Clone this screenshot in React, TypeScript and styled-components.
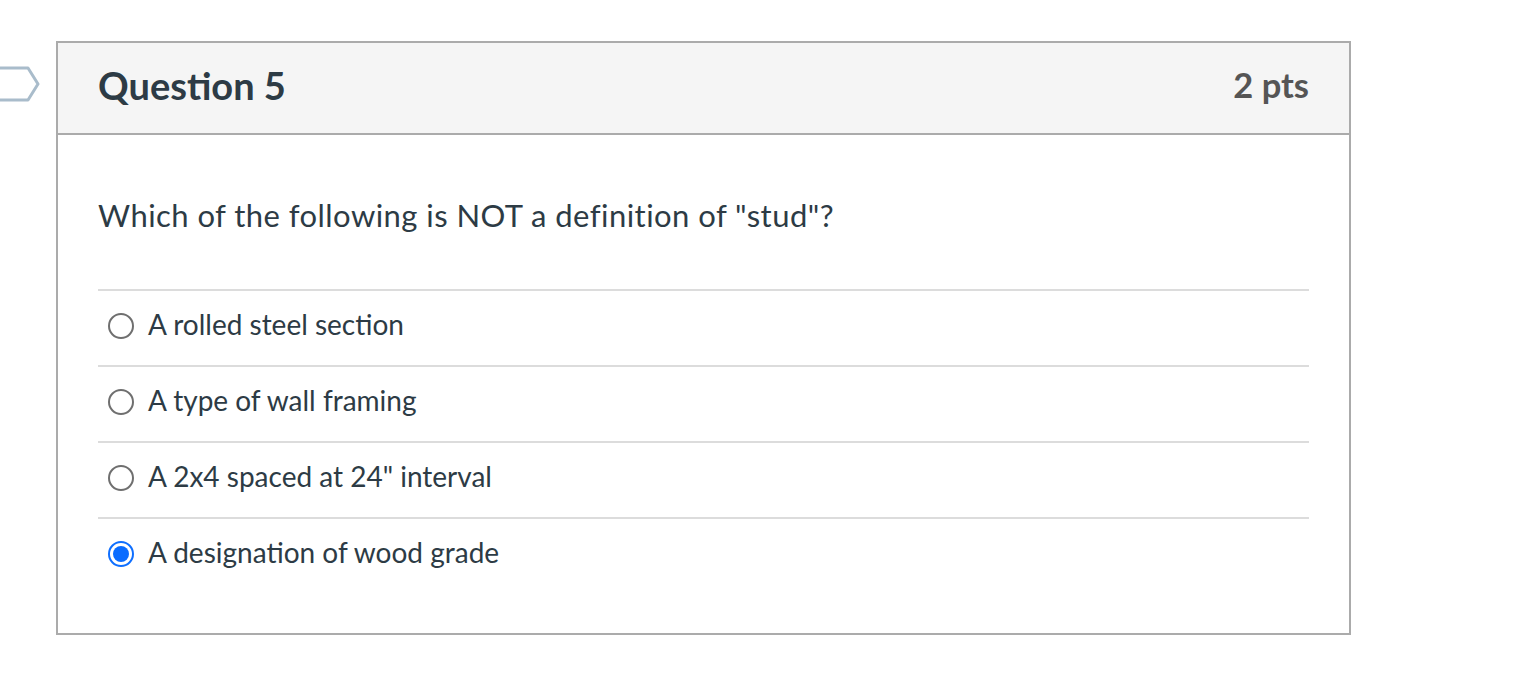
import React from "react";
import styled, { createGlobalStyle } from "styled-components";

const Global = createGlobalStyle`
  html, body { margin: 0; padding: 0; background: #fff; }
  body { font-family: Lato, "Open Sans", sans-serif; color: #2d3b45; }
`;

const Page = styled.div`
  padding: 41px 0 0 56px;
  width: 1295px;
  position: relative;
`;

const Flag = styled.svg`
  position: absolute;
  left: -4px;
  top: 66px;
`;

const Card = styled.div`
  border: 2px solid #ababab;
  background: #fff;
`;

const Header = styled.div`
  display: flex;
  justify-content: space-between;
  align-items: center;
  height: 92px;
  box-sizing: border-box;
  padding: 0 40px 7px;
  background: #f5f5f5;
  border-bottom: 2px solid #ababab;
`;

const Title = styled.h2`
  margin: 0;
  font-size: 38px;
  font-weight: 700;
  color: #2d3b45;
`;

const Points = styled.div`
  font-size: 34.5px;
  font-weight: 700;
  color: #555;
`;

const Body = styled.div`
  padding: 62px 40px 40px;
`;

const QuestionText = styled.p`
  margin: 0 0 56px;
  font-size: 31px;
  letter-spacing: 0.45px;
  line-height: 36px;
  color: #2d3b45;
`;

const Answers = styled.div`
  display: flex;
  flex-direction: column;
`;

const Row = styled.label`
  display: flex;
  align-items: center;
  gap: 14px;
  height: 76px;
  box-sizing: border-box;
  padding: 0 0 8px 10px;
  border-top: 2px solid #dcdcdc;
  font-size: 28px;
  color: #2d3b45;
`;

const Radio = styled.span<{ $checked?: boolean }>`
  width: 26px;
  height: 26px;
  box-sizing: border-box;
  border-radius: 50%;
  border: 2px solid ${p => (p.$checked ? "#0f6fff" : "#6f6f6f")};
  display: flex;
  align-items: center;
  justify-content: center;
  flex-shrink: 0;
  margin-top: 3px;
  &::after {
    content: "";
    width: 16px;
    height: 16px;
    border-radius: 50%;
    background: #0a6cff;
    display: ${p => (p.$checked ? "block" : "none")};
  }
`;

const answers = [
  { text: "A rolled steel section", checked: false },
  { text: "A type of wall framing", checked: false },
  { text: 'A 2x4 spaced at 24" interval', checked: false },
  { text: "A designation of wood grade", checked: true },
];

export default function App() {
  return (
    <>
      <Global />
      <Page>
        <Flag width="44" height="36" viewBox="0 0 44 36">
          <path d="M1 2 H32 L42 18 L32 34 H1" fill="#fff" stroke="#a9bccb" strokeWidth="3" strokeLinejoin="round" />
        </Flag>
        <Card>
          <Header>
            <Title>Question 5</Title>
            <Points>2 pts</Points>
          </Header>
          <Body>
            <QuestionText>Which of the following is NOT a definition of "stud"?</QuestionText>
            <Answers>
              {answers.map(a => (
                <Row key={a.text}>
                  <Radio $checked={a.checked} />
                  <span>{a.text}</span>
                </Row>
              ))}
            </Answers>
          </Body>
        </Card>
      </Page>
    </>
  );
}
